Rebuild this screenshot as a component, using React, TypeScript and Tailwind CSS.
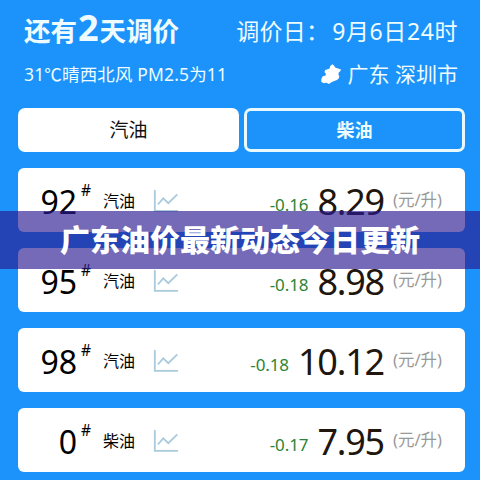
import clsx from "clsx";

type FuelPrice = {
  grade: string;
  kind: string;
  change: string;
  price: string;
};

const FUEL_PRICES: FuelPrice[] = [
  { grade: "92", kind: "汽油", change: "-0.16", price: "8.29" },
  { grade: "95", kind: "汽油", change: "-0.18", price: "8.98" },
  { grade: "98", kind: "汽油", change: "-0.18", price: "10.12" },
  { grade: "0", kind: "柴油", change: "-0.17", price: "7.95" },
];

const TABS = [
  { label: "汽油", active: true },
  { label: "柴油", active: false },
];

function TrendIcon() {
  return (
    <svg className="mt-[2px]" width="26" height="24" viewBox="0 0 26 24" fill="none" stroke="#a9cbdc" strokeWidth="1.8">
      <path d="M1.8 1v20.8H25" />
      <path d="M4.8 15.5 10.3 9.4l5 4.8L24.3 5.4" />
    </svg>
  );
}

function RegionIcon() {
  return (
    <svg width="20" height="20" viewBox="0 0 20 20" fill="#fff">
      <path d="M11.4.2 13 1.4 14.2 3.6 17 4.6 20 5.4 19.4 7 17.8 8.4 17.4 10.4 18.4 12.6 17.6 14.8 15.4 16.2 12.6 17.2 10 18.4 8 20 5.4 18.8 2.8 19.2.2 17.8.4 14.8 1.8 12.2 4.6 11.4 4.8 9.6 3.4 8 4.2 6 6.6 5.2 8.6 4.6 9.2 2Z" />
    </svg>
  );
}

function PriceCard({ item }: { item: FuelPrice }) {
  return (
    <div className="flex h-16 items-center rounded-[6px] bg-white pr-[18px] pl-5">
      <div className="w-[39px] pt-[3px] text-right text-[32px] leading-none text-black">{item.grade}</div>
      <div className="mb-[19px] w-[18px] pl-[4px] text-[15.5px] leading-none text-black">#</div>
      <div className="ml-[8px] w-[50px] pt-px text-[16px] leading-none text-black">{item.kind}</div>
      <TrendIcon />
      <div className="ml-auto flex items-baseline pt-[3px] leading-none">
        <span className="relative -top-[4px] text-[17px] tracking-[-0.1px] text-[#2c8434]">{item.change}</span>
        <span className="ml-[9px] text-[36px] tracking-[-1.2px] text-[#21160d]">{item.price}</span>
      </div>
      <div className="ml-[9px] w-[54px] pt-px text-[16.5px] leading-none whitespace-nowrap text-[#999]">(元/升)</div>
    </div>
  );
}

export default function App() {
  return (
    <div className="relative h-[480px] w-[480px] overflow-hidden bg-[#1b93fb] pr-[15px] pl-[18px] font-['Noto_Sans','Noto_Sans_CJK_SC',sans-serif]">
      <header className="flex h-[108px] flex-col pt-[10px] pr-[7px] pl-[6px] text-[#eefcff]">
        <div className="flex h-10 items-center justify-between whitespace-nowrap">
          <div className="flex items-baseline pb-[4px] text-[26.5px] leading-none font-bold">
            还有<span className="mx-px text-[36px]">2</span>天调价
          </div>
          <div className="flex pt-[2px] text-[23px] leading-none">
            <span className="tracking-[0.2px]">调价日：</span>
            <span className="ml-[3px] tracking-[0.6px]">9月6日24时</span>
          </div>
        </div>
        <div className="mt-[4px] flex h-10 items-center justify-between whitespace-nowrap">
          <div className="text-[17.5px] leading-none tracking-[0.15px]">
            31<span className="font-['Noto_Sans_CJK_SC',sans-serif]">℃</span>晴西北风 PM2.5为11
          </div>
          <div className="flex items-center text-[21px] leading-none">
            <RegionIcon />
            <span className="ml-[7px]">广东 深圳市</span>
          </div>
        </div>
      </header>

      <div className="grid h-11 grid-cols-[221px_221px] gap-[5px]">
        {TABS.map((tab) => (
          <button
            key={tab.label}
            className={clsx(
              "flex items-center justify-center rounded-[7px] leading-none",
              tab.active
                ? "bg-white text-[19px] text-[#111]"
                : "border-3 border-[#e9faff] text-[18px] font-bold text-[#eefcff]",
            )}
          >
            {tab.label}
          </button>
        ))}
      </div>

      <div className="mt-4 flex flex-col gap-4">
        {FUEL_PRICES.map((item) => (
          <PriceCard key={item.grade} item={item} />
        ))}
      </div>

      {/* headline banner over the list */}
      <div className="absolute inset-x-0 top-[211px] flex h-[58px] items-center justify-center bg-[#2a1a90]/65 pb-[4px]">
        <h1 className="font-['Noto_Sans_CJK_SC',sans-serif] text-[30px] leading-none font-black text-white">
          广东油价最新动态今日更新
        </h1>
      </div>
    </div>
  );
}
